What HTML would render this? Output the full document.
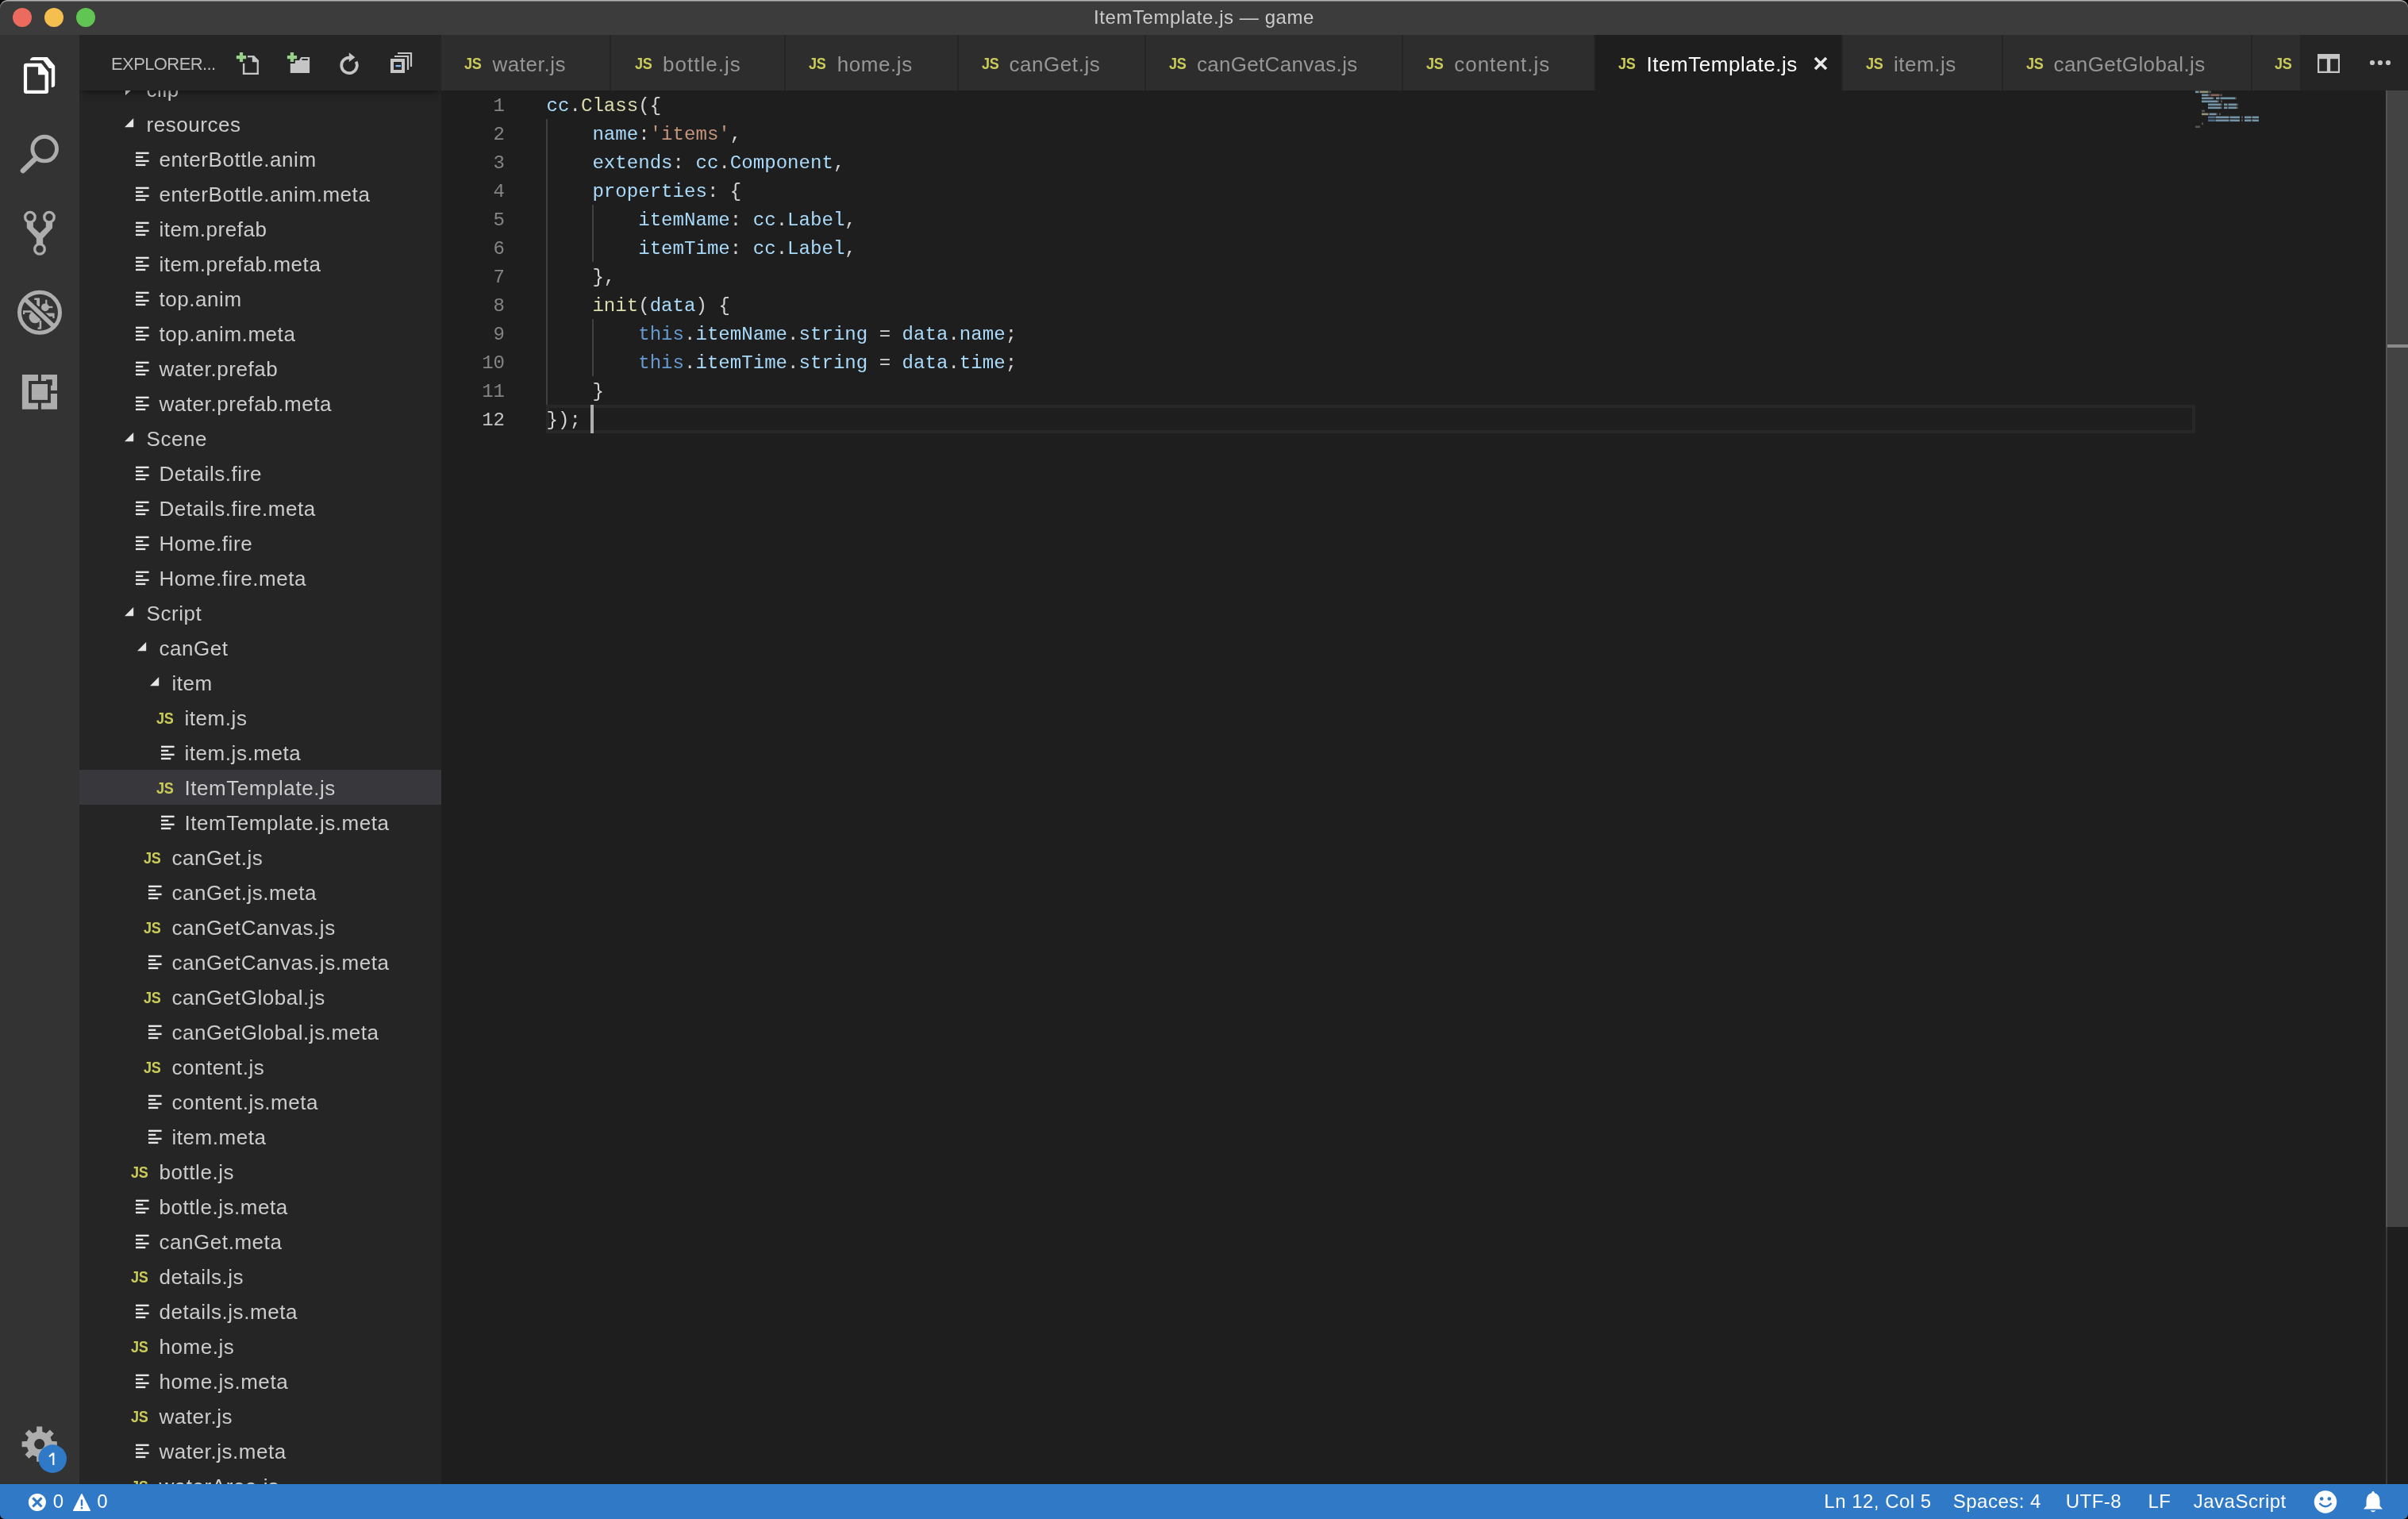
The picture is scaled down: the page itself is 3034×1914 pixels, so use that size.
<!DOCTYPE html>
<html><head><meta charset="utf-8"><title>VS Code</title><style>
html,body{margin:0;padding:0;width:3034px;height:1914px;overflow:hidden;background:#000;}
*{box-sizing:border-box;}
.abs{position:absolute;}
#win{will-change:transform;position:absolute;left:0;top:0;width:3034px;height:1914px;border-radius:9px 9px 6px 6px;overflow:hidden;background:#1e1e1e;font-family:"Liberation Sans",sans-serif;}
#title{position:absolute;left:0;top:0;width:3034px;height:44px;background:#3c3c3c;border-radius:9px 9px 0 0;box-shadow:inset 0 1.2px 0 #b4b4b4, inset 0 2px 0 #6a6a6a;}
#title .t{position:absolute;left:0;top:0;width:3034px;height:44px;line-height:44px;text-align:center;color:#cccccc;font-size:24px;letter-spacing:0.57px;}
.light{position:absolute;top:10px;width:24px;height:24px;border-radius:50%;}
#act{position:absolute;left:0;top:44px;width:100px;height:1826px;background:#333333;}
#side{position:absolute;left:100px;top:44px;width:456px;height:1826px;background:#252526;overflow:hidden;}
#sidehead{position:absolute;left:0;top:0;width:456px;height:70px;background:#252526;z-index:5;box-shadow:0 6px 8px -4px rgba(0,0,0,0.55);}
#sidehead .t{position:absolute;left:40px;top:2px;height:70px;line-height:70px;font-size:22px;color:#bbbbbb;letter-spacing:-0.6px;}
.row{position:absolute;left:0;width:456px;height:44px;}
.row .lbl{position:absolute;top:0;height:44px;line-height:44px;font-size:26px;color:#cccccc;white-space:pre;letter-spacing:0.55px;}
.row.sel{background:#37373c;}
.js{position:absolute;font-weight:bold;color:#cbcb5a;font-size:21px;letter-spacing:-0.3px;line-height:20px;transform:scaleX(0.86);transform-origin:0 0;}
#tabs{position:absolute;left:556px;top:44px;width:2478px;height:70px;background:#252526;}
.tab{position:absolute;top:0;height:70px;background:#2d2d2d;}
.tab.active{background:#1e1e1e;}
.tab .lbl{position:absolute;top:0;height:70px;line-height:70px;font-size:26px;color:#969696;white-space:pre;letter-spacing:0.55px;}
.tab.active .lbl{color:#ffffff;}
#editor{position:absolute;left:556px;top:114px;width:2478px;height:1756px;background:#1e1e1e;overflow:hidden;}
.ln{position:absolute;width:80px;text-align:right;font-family:"Liberation Mono",monospace;font-size:24px;height:36px;line-height:36px;color:#858585;}
.code{position:absolute;font-family:"Liberation Mono",monospace;font-size:24.08px;height:36px;line-height:36px;white-space:pre;color:#d4d4d4;}
.v{color:#aadafa}.f{color:#dcdcaf}.s{color:#c5947c}.k{color:#679ad1}
#status{position:absolute;left:0;top:1870px;width:3034px;height:44px;background:#2f79c7;color:#fff;}
#status .it{position:absolute;top:0;height:44px;line-height:44px;font-size:24px;white-space:pre;letter-spacing:0.5px;}
</style></head>
<body><div id="win">
<div id="title">
<div class="light" style="left:16px;background:#ec6a5e"></div>
<div class="light" style="left:56px;background:#f5bf4f"></div>
<div class="light" style="left:96px;background:#61c554"></div>
<div class="t">ItemTemplate.js — game</div></div>
<div id="act"></div>
<svg class="abs" style="left:0px;top:44px;" width="100" height="100" viewBox="0 44 100 100"><path fill="#ffffff" d="M37.8,76 Q38.6,72 42.5,72 L59.7,72 L69.2,83 L69.2,106.5 Q69.2,110 65.6,110 L64.8,110 L64.8,86.1 L61.9,86.1 L54.4,76 Z"/><path fill="#ffffff" fill-rule="evenodd" d="M33.1,79.8 L52,79.8 L61.1,90.9 L61.1,114.7 Q61.1,117.9 57.9,117.9 L33.1,117.9 Q29.9,117.9 29.9,114.7 L29.9,83 Q29.9,79.8 33.1,79.8 Z M34.1,84.2 L34.1,113.7 L56.5,113.7 L56.5,94.2 L48.1,94.2 L48.1,84.2 Z"/></svg>
<svg class="abs" style="left:0px;top:150px;" width="100" height="80" viewBox="0 150 100 80"><circle cx="56.2" cy="187.6" r="15.3" fill="none" stroke="#adadad" stroke-width="4.9"/><line x1="29" y1="215" x2="45" y2="199.5" stroke="#adadad" stroke-width="6.6" stroke-linecap="round"/></svg>
<svg class="abs" style="left:0px;top:250px;" width="100" height="80" viewBox="0 250 100 80"><circle cx="37.9" cy="273.7" r="6.25" fill="none" stroke="#adadad" stroke-width="3.3"/><circle cx="62" cy="273.7" r="6.25" fill="none" stroke="#adadad" stroke-width="3.3"/><circle cx="50" cy="313.9" r="6.3" fill="none" stroke="#adadad" stroke-width="3.3"/><path fill="#adadad" d="M33.8,279.5 L41.9,279.5 L41.9,286.3 L50,293.7 L57.8,286.3 L57.8,279.5 L66.1,279.5 L66.1,287.3 L54.1,300.2 L54.1,308 L45.8,308 L45.8,300.2 L33.8,287.3 Z"/></svg>
<svg class="abs" style="left:0px;top:360px;" width="100" height="70" viewBox="0 360 100 70"><circle cx="56.9" cy="387.3" r="4.9" fill="#adadad"/><circle cx="44.2" cy="399.6" r="7.6" fill="#adadad"/><path fill="#adadad" d="M43.3,375.5 L50,375.5 L50,386 L46.2,386 L46.2,378 L43.3,378 Z"/><rect x="57.2" y="377.7" width="2.2" height="7" fill="#adadad"/><rect x="59" y="385.8" width="7.3" height="2.3" fill="#adadad"/><path fill="#adadad" d="M54,394.4 L68.6,394.4 L68.6,401 L66.3,401 L66.3,398.8 L54,398.8 Z"/><path fill="#adadad" d="M29,391.3 L41,391.3 L41,393.8 L31.2,393.8 L31.2,396 L29,396 Z"/><path fill="#adadad" d="M49.6,404 L52.2,404 L52.2,414.8 L47.5,414.8 L47.5,412.4 L49.6,412.4 Z"/><line x1="31" y1="376.5" x2="68" y2="411.5" stroke="#333333" stroke-width="10"/><line x1="31" y1="376.5" x2="68" y2="411.5" stroke="#adadad" stroke-width="5.6"/><circle cx="50" cy="393.8" r="25.5" fill="none" stroke="#adadad" stroke-width="5"/></svg>
<svg class="abs" style="left:0px;top:460px;" width="100" height="70" viewBox="0 460 100 70"><path fill="#adadad" fill-rule="evenodd" d="M27.9,472 L48,472 L48,480.1 L36,480.1 L36,507.7 L48,507.7 L48,515.8 L27.9,515.8 Z"/><path fill="#adadad" d="M51.9,472 L72,472 L72,491.9 L63.9,491.9 L63.9,485.7 L65.8,485.7 L65.8,478.2 L58.1,478.2 L58.1,480.1 L51.9,480.1 Z"/><path fill="#adadad" d="M51.9,507.7 L63.9,507.7 L63.9,496 L72,496 L72,515.8 L51.9,515.8 Z"/><rect x="39.9" y="484" width="20.1" height="19.9" fill="#adadad"/></svg>
<svg class="abs" style="left:0px;top:1780px;" width="100" height="90" viewBox="0 1780 100 90"><path fill="#adadad" fill-rule="evenodd" d="M46.06,1803.92 L46.20,1797.58 L53.20,1797.58 L53.34,1803.92 L58.28,1805.96 L62.87,1801.58 L67.82,1806.53 L63.44,1811.12 L65.48,1816.06 L71.82,1816.20 L71.82,1823.20 L65.48,1823.34 L63.44,1828.28 L67.82,1832.87 L62.87,1837.82 L58.28,1833.44 L53.34,1835.48 L53.20,1841.82 L46.20,1841.82 L46.06,1835.48 L41.12,1833.44 L36.53,1837.82 L31.58,1832.87 L35.96,1828.28 L33.92,1823.34 L27.58,1823.20 L27.58,1816.20 L33.92,1816.06 L35.96,1811.12 L31.58,1806.53 L36.53,1801.58 L41.12,1805.96 Z M56.300000000000004,1819.7 A6.6,6.6 0 1,0 43.1,1819.7 A6.6,6.6 0 1,0 56.300000000000004,1819.7 Z"/><circle cx="66.2" cy="1838.1" r="17.8" fill="#2f79c7"/></svg>
<svg class="abs" style="left:50px;top:1820px" width="36" height="36" viewBox="50 1820 36 36"><path d="M66.1,1830.6 L68.4,1830.6 L68.4,1846.1 L66.3,1846.1 L66.3,1833.5 L62.4,1836.2 L61.4,1834.6 Z" fill="#ffffff"/></svg>
<div id="side">
<div class="row" style="top:46px"><svg class="abs" style="left:57px;top:15px" width="12" height="16" viewBox="0 0 12 16"><path d="M1,1 L9,8 L1,15 Z" fill="#e6e6e6"/></svg><div class="lbl" style="left:84.5px;top:1px">clip</div></div>
<div class="row" style="top:90px"><svg class="abs" style="left:57px;top:15px" width="12" height="12" viewBox="0 0 12 12"><path d="M0,11.2 L11.2,0 L11.2,11.2 Z" fill="#e6e6e6"/></svg><div class="lbl" style="left:84.5px;top:1px">resources</div></div>
<div class="row" style="top:134px"><svg class="abs" style="left:71px;top:13px" width="18" height="20" viewBox="0 0 18 20"><rect x="0" y="0.7" width="16.6" height="2.4" fill="#e6e6e6"/><rect x="0" y="5.7" width="9.3" height="2.4" fill="#e6e6e6"/><rect x="0" y="10.7" width="16.6" height="2.4" fill="#e6e6e6"/><rect x="0" y="15.7" width="12.3" height="2.4" fill="#e6e6e6"/></svg><div class="lbl" style="left:100.5px;top:1px">enterBottle.anim</div></div>
<div class="row" style="top:178px"><svg class="abs" style="left:71px;top:13px" width="18" height="20" viewBox="0 0 18 20"><rect x="0" y="0.7" width="16.6" height="2.4" fill="#e6e6e6"/><rect x="0" y="5.7" width="9.3" height="2.4" fill="#e6e6e6"/><rect x="0" y="10.7" width="16.6" height="2.4" fill="#e6e6e6"/><rect x="0" y="15.7" width="12.3" height="2.4" fill="#e6e6e6"/></svg><div class="lbl" style="left:100.5px;top:1px">enterBottle.anim.meta</div></div>
<div class="row" style="top:222px"><svg class="abs" style="left:71px;top:13px" width="18" height="20" viewBox="0 0 18 20"><rect x="0" y="0.7" width="16.6" height="2.4" fill="#e6e6e6"/><rect x="0" y="5.7" width="9.3" height="2.4" fill="#e6e6e6"/><rect x="0" y="10.7" width="16.6" height="2.4" fill="#e6e6e6"/><rect x="0" y="15.7" width="12.3" height="2.4" fill="#e6e6e6"/></svg><div class="lbl" style="left:100.5px;top:1px">item.prefab</div></div>
<div class="row" style="top:266px"><svg class="abs" style="left:71px;top:13px" width="18" height="20" viewBox="0 0 18 20"><rect x="0" y="0.7" width="16.6" height="2.4" fill="#e6e6e6"/><rect x="0" y="5.7" width="9.3" height="2.4" fill="#e6e6e6"/><rect x="0" y="10.7" width="16.6" height="2.4" fill="#e6e6e6"/><rect x="0" y="15.7" width="12.3" height="2.4" fill="#e6e6e6"/></svg><div class="lbl" style="left:100.5px;top:1px">item.prefab.meta</div></div>
<div class="row" style="top:310px"><svg class="abs" style="left:71px;top:13px" width="18" height="20" viewBox="0 0 18 20"><rect x="0" y="0.7" width="16.6" height="2.4" fill="#e6e6e6"/><rect x="0" y="5.7" width="9.3" height="2.4" fill="#e6e6e6"/><rect x="0" y="10.7" width="16.6" height="2.4" fill="#e6e6e6"/><rect x="0" y="15.7" width="12.3" height="2.4" fill="#e6e6e6"/></svg><div class="lbl" style="left:100.5px;top:1px">top.anim</div></div>
<div class="row" style="top:354px"><svg class="abs" style="left:71px;top:13px" width="18" height="20" viewBox="0 0 18 20"><rect x="0" y="0.7" width="16.6" height="2.4" fill="#e6e6e6"/><rect x="0" y="5.7" width="9.3" height="2.4" fill="#e6e6e6"/><rect x="0" y="10.7" width="16.6" height="2.4" fill="#e6e6e6"/><rect x="0" y="15.7" width="12.3" height="2.4" fill="#e6e6e6"/></svg><div class="lbl" style="left:100.5px;top:1px">top.anim.meta</div></div>
<div class="row" style="top:398px"><svg class="abs" style="left:71px;top:13px" width="18" height="20" viewBox="0 0 18 20"><rect x="0" y="0.7" width="16.6" height="2.4" fill="#e6e6e6"/><rect x="0" y="5.7" width="9.3" height="2.4" fill="#e6e6e6"/><rect x="0" y="10.7" width="16.6" height="2.4" fill="#e6e6e6"/><rect x="0" y="15.7" width="12.3" height="2.4" fill="#e6e6e6"/></svg><div class="lbl" style="left:100.5px;top:1px">water.prefab</div></div>
<div class="row" style="top:442px"><svg class="abs" style="left:71px;top:13px" width="18" height="20" viewBox="0 0 18 20"><rect x="0" y="0.7" width="16.6" height="2.4" fill="#e6e6e6"/><rect x="0" y="5.7" width="9.3" height="2.4" fill="#e6e6e6"/><rect x="0" y="10.7" width="16.6" height="2.4" fill="#e6e6e6"/><rect x="0" y="15.7" width="12.3" height="2.4" fill="#e6e6e6"/></svg><div class="lbl" style="left:100.5px;top:1px">water.prefab.meta</div></div>
<div class="row" style="top:486px"><svg class="abs" style="left:57px;top:15px" width="12" height="12" viewBox="0 0 12 12"><path d="M0,11.2 L11.2,0 L11.2,11.2 Z" fill="#e6e6e6"/></svg><div class="lbl" style="left:84.5px;top:1px">Scene</div></div>
<div class="row" style="top:530px"><svg class="abs" style="left:71px;top:13px" width="18" height="20" viewBox="0 0 18 20"><rect x="0" y="0.7" width="16.6" height="2.4" fill="#e6e6e6"/><rect x="0" y="5.7" width="9.3" height="2.4" fill="#e6e6e6"/><rect x="0" y="10.7" width="16.6" height="2.4" fill="#e6e6e6"/><rect x="0" y="15.7" width="12.3" height="2.4" fill="#e6e6e6"/></svg><div class="lbl" style="left:100.5px;top:1px">Details.fire</div></div>
<div class="row" style="top:574px"><svg class="abs" style="left:71px;top:13px" width="18" height="20" viewBox="0 0 18 20"><rect x="0" y="0.7" width="16.6" height="2.4" fill="#e6e6e6"/><rect x="0" y="5.7" width="9.3" height="2.4" fill="#e6e6e6"/><rect x="0" y="10.7" width="16.6" height="2.4" fill="#e6e6e6"/><rect x="0" y="15.7" width="12.3" height="2.4" fill="#e6e6e6"/></svg><div class="lbl" style="left:100.5px;top:1px">Details.fire.meta</div></div>
<div class="row" style="top:618px"><svg class="abs" style="left:71px;top:13px" width="18" height="20" viewBox="0 0 18 20"><rect x="0" y="0.7" width="16.6" height="2.4" fill="#e6e6e6"/><rect x="0" y="5.7" width="9.3" height="2.4" fill="#e6e6e6"/><rect x="0" y="10.7" width="16.6" height="2.4" fill="#e6e6e6"/><rect x="0" y="15.7" width="12.3" height="2.4" fill="#e6e6e6"/></svg><div class="lbl" style="left:100.5px;top:1px">Home.fire</div></div>
<div class="row" style="top:662px"><svg class="abs" style="left:71px;top:13px" width="18" height="20" viewBox="0 0 18 20"><rect x="0" y="0.7" width="16.6" height="2.4" fill="#e6e6e6"/><rect x="0" y="5.7" width="9.3" height="2.4" fill="#e6e6e6"/><rect x="0" y="10.7" width="16.6" height="2.4" fill="#e6e6e6"/><rect x="0" y="15.7" width="12.3" height="2.4" fill="#e6e6e6"/></svg><div class="lbl" style="left:100.5px;top:1px">Home.fire.meta</div></div>
<div class="row" style="top:706px"><svg class="abs" style="left:57px;top:15px" width="12" height="12" viewBox="0 0 12 12"><path d="M0,11.2 L11.2,0 L11.2,11.2 Z" fill="#e6e6e6"/></svg><div class="lbl" style="left:84.5px;top:1px">Script</div></div>
<div class="row" style="top:750px"><svg class="abs" style="left:73px;top:15px" width="12" height="12" viewBox="0 0 12 12"><path d="M0,11.2 L11.2,0 L11.2,11.2 Z" fill="#e6e6e6"/></svg><div class="lbl" style="left:100.5px;top:1px">canGet</div></div>
<div class="row" style="top:794px"><svg class="abs" style="left:89px;top:15px" width="12" height="12" viewBox="0 0 12 12"><path d="M0,11.2 L11.2,0 L11.2,11.2 Z" fill="#e6e6e6"/></svg><div class="lbl" style="left:116.5px;top:1px">item</div></div>
<div class="row" style="top:838px"><div class="js" style="left:96.5px;top:13px;">JS</div><div class="lbl" style="left:132.5px;top:1px">item.js</div></div>
<div class="row" style="top:882px"><svg class="abs" style="left:103px;top:13px" width="18" height="20" viewBox="0 0 18 20"><rect x="0" y="0.7" width="16.6" height="2.4" fill="#e6e6e6"/><rect x="0" y="5.7" width="9.3" height="2.4" fill="#e6e6e6"/><rect x="0" y="10.7" width="16.6" height="2.4" fill="#e6e6e6"/><rect x="0" y="15.7" width="12.3" height="2.4" fill="#e6e6e6"/></svg><div class="lbl" style="left:132.5px;top:1px">item.js.meta</div></div>
<div class="row sel" style="top:926px"><div class="js" style="left:96.5px;top:13px;">JS</div><div class="lbl" style="left:132.5px;top:1px">ItemTemplate.js</div></div>
<div class="row" style="top:970px"><svg class="abs" style="left:103px;top:13px" width="18" height="20" viewBox="0 0 18 20"><rect x="0" y="0.7" width="16.6" height="2.4" fill="#e6e6e6"/><rect x="0" y="5.7" width="9.3" height="2.4" fill="#e6e6e6"/><rect x="0" y="10.7" width="16.6" height="2.4" fill="#e6e6e6"/><rect x="0" y="15.7" width="12.3" height="2.4" fill="#e6e6e6"/></svg><div class="lbl" style="left:132.5px;top:1px">ItemTemplate.js.meta</div></div>
<div class="row" style="top:1014px"><div class="js" style="left:80.5px;top:13px;">JS</div><div class="lbl" style="left:116.5px;top:1px">canGet.js</div></div>
<div class="row" style="top:1058px"><svg class="abs" style="left:87px;top:13px" width="18" height="20" viewBox="0 0 18 20"><rect x="0" y="0.7" width="16.6" height="2.4" fill="#e6e6e6"/><rect x="0" y="5.7" width="9.3" height="2.4" fill="#e6e6e6"/><rect x="0" y="10.7" width="16.6" height="2.4" fill="#e6e6e6"/><rect x="0" y="15.7" width="12.3" height="2.4" fill="#e6e6e6"/></svg><div class="lbl" style="left:116.5px;top:1px">canGet.js.meta</div></div>
<div class="row" style="top:1102px"><div class="js" style="left:80.5px;top:13px;">JS</div><div class="lbl" style="left:116.5px;top:1px">canGetCanvas.js</div></div>
<div class="row" style="top:1146px"><svg class="abs" style="left:87px;top:13px" width="18" height="20" viewBox="0 0 18 20"><rect x="0" y="0.7" width="16.6" height="2.4" fill="#e6e6e6"/><rect x="0" y="5.7" width="9.3" height="2.4" fill="#e6e6e6"/><rect x="0" y="10.7" width="16.6" height="2.4" fill="#e6e6e6"/><rect x="0" y="15.7" width="12.3" height="2.4" fill="#e6e6e6"/></svg><div class="lbl" style="left:116.5px;top:1px">canGetCanvas.js.meta</div></div>
<div class="row" style="top:1190px"><div class="js" style="left:80.5px;top:13px;">JS</div><div class="lbl" style="left:116.5px;top:1px">canGetGlobal.js</div></div>
<div class="row" style="top:1234px"><svg class="abs" style="left:87px;top:13px" width="18" height="20" viewBox="0 0 18 20"><rect x="0" y="0.7" width="16.6" height="2.4" fill="#e6e6e6"/><rect x="0" y="5.7" width="9.3" height="2.4" fill="#e6e6e6"/><rect x="0" y="10.7" width="16.6" height="2.4" fill="#e6e6e6"/><rect x="0" y="15.7" width="12.3" height="2.4" fill="#e6e6e6"/></svg><div class="lbl" style="left:116.5px;top:1px">canGetGlobal.js.meta</div></div>
<div class="row" style="top:1278px"><div class="js" style="left:80.5px;top:13px;">JS</div><div class="lbl" style="left:116.5px;top:1px">content.js</div></div>
<div class="row" style="top:1322px"><svg class="abs" style="left:87px;top:13px" width="18" height="20" viewBox="0 0 18 20"><rect x="0" y="0.7" width="16.6" height="2.4" fill="#e6e6e6"/><rect x="0" y="5.7" width="9.3" height="2.4" fill="#e6e6e6"/><rect x="0" y="10.7" width="16.6" height="2.4" fill="#e6e6e6"/><rect x="0" y="15.7" width="12.3" height="2.4" fill="#e6e6e6"/></svg><div class="lbl" style="left:116.5px;top:1px">content.js.meta</div></div>
<div class="row" style="top:1366px"><svg class="abs" style="left:87px;top:13px" width="18" height="20" viewBox="0 0 18 20"><rect x="0" y="0.7" width="16.6" height="2.4" fill="#e6e6e6"/><rect x="0" y="5.7" width="9.3" height="2.4" fill="#e6e6e6"/><rect x="0" y="10.7" width="16.6" height="2.4" fill="#e6e6e6"/><rect x="0" y="15.7" width="12.3" height="2.4" fill="#e6e6e6"/></svg><div class="lbl" style="left:116.5px;top:1px">item.meta</div></div>
<div class="row" style="top:1410px"><div class="js" style="left:64.5px;top:13px;">JS</div><div class="lbl" style="left:100.5px;top:1px">bottle.js</div></div>
<div class="row" style="top:1454px"><svg class="abs" style="left:71px;top:13px" width="18" height="20" viewBox="0 0 18 20"><rect x="0" y="0.7" width="16.6" height="2.4" fill="#e6e6e6"/><rect x="0" y="5.7" width="9.3" height="2.4" fill="#e6e6e6"/><rect x="0" y="10.7" width="16.6" height="2.4" fill="#e6e6e6"/><rect x="0" y="15.7" width="12.3" height="2.4" fill="#e6e6e6"/></svg><div class="lbl" style="left:100.5px;top:1px">bottle.js.meta</div></div>
<div class="row" style="top:1498px"><svg class="abs" style="left:71px;top:13px" width="18" height="20" viewBox="0 0 18 20"><rect x="0" y="0.7" width="16.6" height="2.4" fill="#e6e6e6"/><rect x="0" y="5.7" width="9.3" height="2.4" fill="#e6e6e6"/><rect x="0" y="10.7" width="16.6" height="2.4" fill="#e6e6e6"/><rect x="0" y="15.7" width="12.3" height="2.4" fill="#e6e6e6"/></svg><div class="lbl" style="left:100.5px;top:1px">canGet.meta</div></div>
<div class="row" style="top:1542px"><div class="js" style="left:64.5px;top:13px;">JS</div><div class="lbl" style="left:100.5px;top:1px">details.js</div></div>
<div class="row" style="top:1586px"><svg class="abs" style="left:71px;top:13px" width="18" height="20" viewBox="0 0 18 20"><rect x="0" y="0.7" width="16.6" height="2.4" fill="#e6e6e6"/><rect x="0" y="5.7" width="9.3" height="2.4" fill="#e6e6e6"/><rect x="0" y="10.7" width="16.6" height="2.4" fill="#e6e6e6"/><rect x="0" y="15.7" width="12.3" height="2.4" fill="#e6e6e6"/></svg><div class="lbl" style="left:100.5px;top:1px">details.js.meta</div></div>
<div class="row" style="top:1630px"><div class="js" style="left:64.5px;top:13px;">JS</div><div class="lbl" style="left:100.5px;top:1px">home.js</div></div>
<div class="row" style="top:1674px"><svg class="abs" style="left:71px;top:13px" width="18" height="20" viewBox="0 0 18 20"><rect x="0" y="0.7" width="16.6" height="2.4" fill="#e6e6e6"/><rect x="0" y="5.7" width="9.3" height="2.4" fill="#e6e6e6"/><rect x="0" y="10.7" width="16.6" height="2.4" fill="#e6e6e6"/><rect x="0" y="15.7" width="12.3" height="2.4" fill="#e6e6e6"/></svg><div class="lbl" style="left:100.5px;top:1px">home.js.meta</div></div>
<div class="row" style="top:1718px"><div class="js" style="left:64.5px;top:13px;">JS</div><div class="lbl" style="left:100.5px;top:1px">water.js</div></div>
<div class="row" style="top:1762px"><svg class="abs" style="left:71px;top:13px" width="18" height="20" viewBox="0 0 18 20"><rect x="0" y="0.7" width="16.6" height="2.4" fill="#e6e6e6"/><rect x="0" y="5.7" width="9.3" height="2.4" fill="#e6e6e6"/><rect x="0" y="10.7" width="16.6" height="2.4" fill="#e6e6e6"/><rect x="0" y="15.7" width="12.3" height="2.4" fill="#e6e6e6"/></svg><div class="lbl" style="left:100.5px;top:1px">water.js.meta</div></div>
<div class="row" style="top:1806px"><div class="js" style="left:64.5px;top:13px;">JS</div><div class="lbl" style="left:100.5px;top:1px">waterArea.js</div></div>
<div id="sidehead"><div class="t">EXPLORER...</div></div>
</div>
<svg class="abs" style="left:280px;top:55px;z-index:10;" width="260" height="50" viewBox="280 55 260 50"><rect x="312" y="70.1" width="8" height="2.2" fill="#c5c5c5"/><path fill="#c5c5c5" d="M317.8,70.1 L320,70.1 L325.9,75.9 L325.9,78.2 L317.8,78.2 Z"/><rect x="323.6" y="75.7" width="2.3" height="18.3" fill="#c5c5c5"/><rect x="305.9" y="91.7" width="20" height="2.3" fill="#c5c5c5"/><rect x="305.9" y="79.9" width="2.4" height="14.1" fill="#c5c5c5"/><path fill="#99cf8c" d="M301.9,65.9 L306.1,65.9 L306.1,70.1 L310.2,70.1 L310.2,74.25 L306.1,74.25 L306.1,78 L301.9,78 L301.9,74.25 L297.8,74.25 L297.8,70.1 L301.9,70.1 Z"/><path fill="#c5c5c5" d="M365.8,79.9 L371.8,79.9 L371.8,76.1 L377,76.1 L379.3,72 L390.1,72 L390.1,91.9 L365.8,91.9 Z"/><rect x="380.5" y="74" width="7.3" height="1.9" fill="#252526"/><path fill="#99cf8c" d="M365.8,65.9 L370.1,65.9 L370.1,70.1 L374.1,70.1 L374.1,74.25 L370.1,74.25 L370.1,78 L365.8,78 L365.8,74.25 L361.9,74.25 L361.9,70.1 L365.8,70.1 Z"/><path fill="none" stroke="#c5c5c5" stroke-width="3.7" d="M440.5,72.55 A9.8,9.8 0 1,0 448.6,77.6"/><path fill="#c5c5c5" d="M439.8,66.3 L447.4,72.2 L439.8,78.1 Z"/><path fill="none" stroke="#c5c5c5" stroke-width="2.2" d="M501,67 L518,67 L518,84"/><path fill="none" stroke="#c5c5c5" stroke-width="2.2" d="M497,71 L514,71 L514,88"/><rect x="494" y="76" width="14" height="14" fill="none" stroke="#c5c5c5" stroke-width="4"/><rect x="498.5" y="82" width="6.5" height="2.2" fill="#86bcf9"/></svg>
<div id="tabs">
<div class="tab" style="left:0px;width:212px"><div class="js" style="left:28.5px;top:26px;">JS</div><div class="lbl" style="left:64.5px;top:2px;letter-spacing:0.55px">water.js</div></div>
<div class="tab" style="left:214px;width:218px"><div class="js" style="left:29.5px;top:26px;">JS</div><div class="lbl" style="left:65.10000000000002px;top:2px;letter-spacing:1.0px">bottle.js</div></div>
<div class="tab" style="left:434px;width:216px"><div class="js" style="left:28.899999999999977px;top:26px;">JS</div><div class="lbl" style="left:64.79999999999995px;top:2px;letter-spacing:0.55px">home.js</div></div>
<div class="tab" style="left:652px;width:234px"><div class="js" style="left:29.09999999999991px;top:26px;">JS</div><div class="lbl" style="left:63.5px;top:2px;letter-spacing:0.55px">canGet.js</div></div>
<div class="tab" style="left:888px;width:322px"><div class="js" style="left:28.5px;top:26px;">JS</div><div class="lbl" style="left:63.90000000000009px;top:2px;letter-spacing:0.31px">canGetCanvas.js</div></div>
<div class="tab" style="left:1212px;width:240px"><div class="js" style="left:28.5px;top:26px;">JS</div><div class="lbl" style="left:64.29999999999995px;top:2px;letter-spacing:0.95px">content.js</div></div>
<div class="tab active" style="left:1454px;width:310px"><div class="js" style="left:29.0px;top:26px;">JS</div><div class="lbl" style="left:64.5px;top:2px;letter-spacing:0.55px">ItemTemplate.js</div><svg class="abs" style="left:274px;top:26px" width="20" height="20" viewBox="0 0 20 20"><path d="M3,3 L17,17 M17,3 L3,17" stroke="#e8e8e8" stroke-width="3.6"/></svg></div>
<div class="tab" style="left:1766px;width:200px"><div class="js" style="left:28.5px;top:26px;">JS</div><div class="lbl" style="left:63.90000000000009px;top:2px;letter-spacing:0.55px">item.js</div></div>
<div class="tab" style="left:1968px;width:312px"><div class="js" style="left:28.5px;top:26px;">JS</div><div class="lbl" style="left:63.5px;top:2px;letter-spacing:0.41px">canGetGlobal.js</div></div>
<div class="tab" style="left:2282px;width:60px"><div class="js" style="left:28.0px;top:26px;">JS</div></div>
<svg class="abs" style="left:2364px;top:24px;z-index:2" width="32" height="28" viewBox="2920 68 32 28"><rect x="2920" y="68" width="28" height="24" fill="#c5c5c5"/><rect x="2922.2" y="74.2" width="9.7" height="15.5" fill="#252526"/><rect x="2936.2" y="74.2" width="9.7" height="15.5" fill="#252526"/></svg>
<svg class="abs" style="left:2428px;top:24px" width="40" height="16" viewBox="2984 68 40 16"><circle cx="2989" cy="79" r="3.1" fill="#c5c5c5"/><circle cx="2998.9" cy="79" r="3.1" fill="#c5c5c5"/><circle cx="3009" cy="79" r="3.1" fill="#c5c5c5"/></svg>
</div>
<div id="editor">
<div class="abs" style="left:132px;top:396px;width:2078px;height:36px;border:4px solid #282828;"></div>
<div class="abs" style="left:132px;top:36px;width:2px;height:360px;background:#404040;"></div>
<div class="abs" style="left:190px;top:144px;width:2px;height:72px;background:#404040;"></div>
<div class="abs" style="left:190px;top:288px;width:2px;height:72px;background:#404040;"></div>
<div class="ln" style="left:0px;top:2px;color:#858585">1</div>
<div class="code" style="left:132.5999999999999px;top:2px"><span class="v">cc</span>.<span class="f">Class</span>({</div>
<div class="ln" style="left:0px;top:38px;color:#858585">2</div>
<div class="code" style="left:132.5999999999999px;top:38px">    <span class="v">name</span>:<span class="s">'items'</span>,</div>
<div class="ln" style="left:0px;top:74px;color:#858585">3</div>
<div class="code" style="left:132.5999999999999px;top:74px">    <span class="v">extends</span>: <span class="v">cc</span>.<span class="v">Component</span>,</div>
<div class="ln" style="left:0px;top:110px;color:#858585">4</div>
<div class="code" style="left:132.5999999999999px;top:110px">    <span class="v">properties</span>: {</div>
<div class="ln" style="left:0px;top:146px;color:#858585">5</div>
<div class="code" style="left:132.5999999999999px;top:146px">        <span class="v">itemName</span>: <span class="v">cc</span>.<span class="v">Label</span>,</div>
<div class="ln" style="left:0px;top:182px;color:#858585">6</div>
<div class="code" style="left:132.5999999999999px;top:182px">        <span class="v">itemTime</span>: <span class="v">cc</span>.<span class="v">Label</span>,</div>
<div class="ln" style="left:0px;top:218px;color:#858585">7</div>
<div class="code" style="left:132.5999999999999px;top:218px">    },</div>
<div class="ln" style="left:0px;top:254px;color:#858585">8</div>
<div class="code" style="left:132.5999999999999px;top:254px">    <span class="f">init</span>(<span class="v">data</span>) {</div>
<div class="ln" style="left:0px;top:290px;color:#858585">9</div>
<div class="code" style="left:132.5999999999999px;top:290px">        <span class="k">this</span>.<span class="v">itemName</span>.<span class="v">string</span> = <span class="v">data</span>.<span class="v">name</span>;</div>
<div class="ln" style="left:0px;top:326px;color:#858585">10</div>
<div class="code" style="left:132.5999999999999px;top:326px">        <span class="k">this</span>.<span class="v">itemTime</span>.<span class="v">string</span> = <span class="v">data</span>.<span class="v">time</span>;</div>
<div class="ln" style="left:0px;top:362px;color:#858585">11</div>
<div class="code" style="left:132.5999999999999px;top:362px">    }</div>
<div class="ln" style="left:0px;top:398px;color:#c6c6c6">12</div>
<div class="code" style="left:132.5999999999999px;top:398px">});</div>
<div class="abs" style="left:188px;top:396px;width:4px;height:36px;background:#aeafad;"></div>
<svg class="abs" style="left:2210px;top:0px" width="80" height="50" viewBox="0 0 80 50"><rect x="0" y="0.5" width="2" height="2.6" fill="#aadafa" opacity="0.62"/><rect x="2" y="0.5" width="2" height="2.6" fill="#aadafa" opacity="0.62"/><rect x="4" y="0.5" width="2" height="2.6" fill="#d4d4d4" opacity="0.3"/><rect x="6" y="0.5" width="2" height="2.6" fill="#dcdcaf" opacity="0.62"/><rect x="8" y="0.5" width="2" height="2.6" fill="#dcdcaf" opacity="0.62"/><rect x="10" y="0.5" width="2" height="2.6" fill="#dcdcaf" opacity="0.62"/><rect x="12" y="0.5" width="2" height="2.6" fill="#dcdcaf" opacity="0.62"/><rect x="14" y="0.5" width="2" height="2.6" fill="#dcdcaf" opacity="0.62"/><rect x="16" y="0.5" width="2" height="2.6" fill="#d4d4d4" opacity="0.3"/><rect x="18" y="0.5" width="2" height="2.6" fill="#d4d4d4" opacity="0.3"/><rect x="8" y="4.5" width="2" height="2.6" fill="#aadafa" opacity="0.62"/><rect x="10" y="4.5" width="2" height="2.6" fill="#aadafa" opacity="0.62"/><rect x="12" y="4.5" width="2" height="2.6" fill="#aadafa" opacity="0.62"/><rect x="14" y="4.5" width="2" height="2.6" fill="#aadafa" opacity="0.62"/><rect x="16" y="4.5" width="2" height="2.6" fill="#d4d4d4" opacity="0.3"/><rect x="18" y="4.5" width="2" height="2.6" fill="#c5947c" opacity="0.3"/><rect x="20" y="4.5" width="2" height="2.6" fill="#c5947c" opacity="0.62"/><rect x="22" y="4.5" width="2" height="2.6" fill="#c5947c" opacity="0.62"/><rect x="24" y="4.5" width="2" height="2.6" fill="#c5947c" opacity="0.62"/><rect x="26" y="4.5" width="2" height="2.6" fill="#c5947c" opacity="0.62"/><rect x="28" y="4.5" width="2" height="2.6" fill="#c5947c" opacity="0.62"/><rect x="30" y="4.5" width="2" height="2.6" fill="#c5947c" opacity="0.3"/><rect x="32" y="4.5" width="2" height="2.6" fill="#d4d4d4" opacity="0.3"/><rect x="8" y="8.5" width="2" height="2.6" fill="#aadafa" opacity="0.62"/><rect x="10" y="8.5" width="2" height="2.6" fill="#aadafa" opacity="0.62"/><rect x="12" y="8.5" width="2" height="2.6" fill="#aadafa" opacity="0.62"/><rect x="14" y="8.5" width="2" height="2.6" fill="#aadafa" opacity="0.62"/><rect x="16" y="8.5" width="2" height="2.6" fill="#aadafa" opacity="0.62"/><rect x="18" y="8.5" width="2" height="2.6" fill="#aadafa" opacity="0.62"/><rect x="20" y="8.5" width="2" height="2.6" fill="#aadafa" opacity="0.62"/><rect x="22" y="8.5" width="2" height="2.6" fill="#d4d4d4" opacity="0.3"/><rect x="26" y="8.5" width="2" height="2.6" fill="#aadafa" opacity="0.62"/><rect x="28" y="8.5" width="2" height="2.6" fill="#aadafa" opacity="0.62"/><rect x="30" y="8.5" width="2" height="2.6" fill="#d4d4d4" opacity="0.3"/><rect x="32" y="8.5" width="2" height="2.6" fill="#aadafa" opacity="0.62"/><rect x="34" y="8.5" width="2" height="2.6" fill="#aadafa" opacity="0.62"/><rect x="36" y="8.5" width="2" height="2.6" fill="#aadafa" opacity="0.62"/><rect x="38" y="8.5" width="2" height="2.6" fill="#aadafa" opacity="0.62"/><rect x="40" y="8.5" width="2" height="2.6" fill="#aadafa" opacity="0.62"/><rect x="42" y="8.5" width="2" height="2.6" fill="#aadafa" opacity="0.62"/><rect x="44" y="8.5" width="2" height="2.6" fill="#aadafa" opacity="0.62"/><rect x="46" y="8.5" width="2" height="2.6" fill="#aadafa" opacity="0.62"/><rect x="48" y="8.5" width="2" height="2.6" fill="#aadafa" opacity="0.62"/><rect x="50" y="8.5" width="2" height="2.6" fill="#d4d4d4" opacity="0.3"/><rect x="8" y="12.5" width="2" height="2.6" fill="#aadafa" opacity="0.62"/><rect x="10" y="12.5" width="2" height="2.6" fill="#aadafa" opacity="0.62"/><rect x="12" y="12.5" width="2" height="2.6" fill="#aadafa" opacity="0.62"/><rect x="14" y="12.5" width="2" height="2.6" fill="#aadafa" opacity="0.62"/><rect x="16" y="12.5" width="2" height="2.6" fill="#aadafa" opacity="0.62"/><rect x="18" y="12.5" width="2" height="2.6" fill="#aadafa" opacity="0.62"/><rect x="20" y="12.5" width="2" height="2.6" fill="#aadafa" opacity="0.62"/><rect x="22" y="12.5" width="2" height="2.6" fill="#aadafa" opacity="0.62"/><rect x="24" y="12.5" width="2" height="2.6" fill="#aadafa" opacity="0.62"/><rect x="26" y="12.5" width="2" height="2.6" fill="#aadafa" opacity="0.62"/><rect x="28" y="12.5" width="2" height="2.6" fill="#d4d4d4" opacity="0.3"/><rect x="32" y="12.5" width="2" height="2.6" fill="#d4d4d4" opacity="0.3"/><rect x="16" y="16.5" width="2" height="2.6" fill="#aadafa" opacity="0.62"/><rect x="18" y="16.5" width="2" height="2.6" fill="#aadafa" opacity="0.62"/><rect x="20" y="16.5" width="2" height="2.6" fill="#aadafa" opacity="0.62"/><rect x="22" y="16.5" width="2" height="2.6" fill="#aadafa" opacity="0.62"/><rect x="24" y="16.5" width="2" height="2.6" fill="#aadafa" opacity="0.62"/><rect x="26" y="16.5" width="2" height="2.6" fill="#aadafa" opacity="0.62"/><rect x="28" y="16.5" width="2" height="2.6" fill="#aadafa" opacity="0.62"/><rect x="30" y="16.5" width="2" height="2.6" fill="#aadafa" opacity="0.62"/><rect x="32" y="16.5" width="2" height="2.6" fill="#d4d4d4" opacity="0.3"/><rect x="36" y="16.5" width="2" height="2.6" fill="#aadafa" opacity="0.62"/><rect x="38" y="16.5" width="2" height="2.6" fill="#aadafa" opacity="0.62"/><rect x="40" y="16.5" width="2" height="2.6" fill="#d4d4d4" opacity="0.3"/><rect x="42" y="16.5" width="2" height="2.6" fill="#aadafa" opacity="0.62"/><rect x="44" y="16.5" width="2" height="2.6" fill="#aadafa" opacity="0.62"/><rect x="46" y="16.5" width="2" height="2.6" fill="#aadafa" opacity="0.62"/><rect x="48" y="16.5" width="2" height="2.6" fill="#aadafa" opacity="0.62"/><rect x="50" y="16.5" width="2" height="2.6" fill="#aadafa" opacity="0.62"/><rect x="52" y="16.5" width="2" height="2.6" fill="#d4d4d4" opacity="0.3"/><rect x="16" y="20.5" width="2" height="2.6" fill="#aadafa" opacity="0.62"/><rect x="18" y="20.5" width="2" height="2.6" fill="#aadafa" opacity="0.62"/><rect x="20" y="20.5" width="2" height="2.6" fill="#aadafa" opacity="0.62"/><rect x="22" y="20.5" width="2" height="2.6" fill="#aadafa" opacity="0.62"/><rect x="24" y="20.5" width="2" height="2.6" fill="#aadafa" opacity="0.62"/><rect x="26" y="20.5" width="2" height="2.6" fill="#aadafa" opacity="0.62"/><rect x="28" y="20.5" width="2" height="2.6" fill="#aadafa" opacity="0.62"/><rect x="30" y="20.5" width="2" height="2.6" fill="#aadafa" opacity="0.62"/><rect x="32" y="20.5" width="2" height="2.6" fill="#d4d4d4" opacity="0.3"/><rect x="36" y="20.5" width="2" height="2.6" fill="#aadafa" opacity="0.62"/><rect x="38" y="20.5" width="2" height="2.6" fill="#aadafa" opacity="0.62"/><rect x="40" y="20.5" width="2" height="2.6" fill="#d4d4d4" opacity="0.3"/><rect x="42" y="20.5" width="2" height="2.6" fill="#aadafa" opacity="0.62"/><rect x="44" y="20.5" width="2" height="2.6" fill="#aadafa" opacity="0.62"/><rect x="46" y="20.5" width="2" height="2.6" fill="#aadafa" opacity="0.62"/><rect x="48" y="20.5" width="2" height="2.6" fill="#aadafa" opacity="0.62"/><rect x="50" y="20.5" width="2" height="2.6" fill="#aadafa" opacity="0.62"/><rect x="52" y="20.5" width="2" height="2.6" fill="#d4d4d4" opacity="0.3"/><rect x="8" y="24.5" width="2" height="2.6" fill="#d4d4d4" opacity="0.3"/><rect x="10" y="24.5" width="2" height="2.6" fill="#d4d4d4" opacity="0.3"/><rect x="8" y="28.5" width="2" height="2.6" fill="#dcdcaf" opacity="0.62"/><rect x="10" y="28.5" width="2" height="2.6" fill="#dcdcaf" opacity="0.62"/><rect x="12" y="28.5" width="2" height="2.6" fill="#dcdcaf" opacity="0.62"/><rect x="14" y="28.5" width="2" height="2.6" fill="#dcdcaf" opacity="0.62"/><rect x="16" y="28.5" width="2" height="2.6" fill="#d4d4d4" opacity="0.3"/><rect x="18" y="28.5" width="2" height="2.6" fill="#aadafa" opacity="0.62"/><rect x="20" y="28.5" width="2" height="2.6" fill="#aadafa" opacity="0.62"/><rect x="22" y="28.5" width="2" height="2.6" fill="#aadafa" opacity="0.62"/><rect x="24" y="28.5" width="2" height="2.6" fill="#aadafa" opacity="0.62"/><rect x="26" y="28.5" width="2" height="2.6" fill="#d4d4d4" opacity="0.3"/><rect x="30" y="28.5" width="2" height="2.6" fill="#d4d4d4" opacity="0.3"/><rect x="16" y="32.5" width="2" height="2.6" fill="#679ad1" opacity="0.62"/><rect x="18" y="32.5" width="2" height="2.6" fill="#679ad1" opacity="0.62"/><rect x="20" y="32.5" width="2" height="2.6" fill="#679ad1" opacity="0.62"/><rect x="22" y="32.5" width="2" height="2.6" fill="#679ad1" opacity="0.62"/><rect x="24" y="32.5" width="2" height="2.6" fill="#d4d4d4" opacity="0.3"/><rect x="26" y="32.5" width="2" height="2.6" fill="#aadafa" opacity="0.62"/><rect x="28" y="32.5" width="2" height="2.6" fill="#aadafa" opacity="0.62"/><rect x="30" y="32.5" width="2" height="2.6" fill="#aadafa" opacity="0.62"/><rect x="32" y="32.5" width="2" height="2.6" fill="#aadafa" opacity="0.62"/><rect x="34" y="32.5" width="2" height="2.6" fill="#aadafa" opacity="0.62"/><rect x="36" y="32.5" width="2" height="2.6" fill="#aadafa" opacity="0.62"/><rect x="38" y="32.5" width="2" height="2.6" fill="#aadafa" opacity="0.62"/><rect x="40" y="32.5" width="2" height="2.6" fill="#aadafa" opacity="0.62"/><rect x="42" y="32.5" width="2" height="2.6" fill="#d4d4d4" opacity="0.3"/><rect x="44" y="32.5" width="2" height="2.6" fill="#aadafa" opacity="0.62"/><rect x="46" y="32.5" width="2" height="2.6" fill="#aadafa" opacity="0.62"/><rect x="48" y="32.5" width="2" height="2.6" fill="#aadafa" opacity="0.62"/><rect x="50" y="32.5" width="2" height="2.6" fill="#aadafa" opacity="0.62"/><rect x="52" y="32.5" width="2" height="2.6" fill="#aadafa" opacity="0.62"/><rect x="54" y="32.5" width="2" height="2.6" fill="#aadafa" opacity="0.62"/><rect x="58" y="32.5" width="2" height="2.6" fill="#d4d4d4" opacity="0.3"/><rect x="62" y="32.5" width="2" height="2.6" fill="#aadafa" opacity="0.62"/><rect x="64" y="32.5" width="2" height="2.6" fill="#aadafa" opacity="0.62"/><rect x="66" y="32.5" width="2" height="2.6" fill="#aadafa" opacity="0.62"/><rect x="68" y="32.5" width="2" height="2.6" fill="#aadafa" opacity="0.62"/><rect x="70" y="32.5" width="2" height="2.6" fill="#d4d4d4" opacity="0.3"/><rect x="72" y="32.5" width="2" height="2.6" fill="#aadafa" opacity="0.62"/><rect x="74" y="32.5" width="2" height="2.6" fill="#aadafa" opacity="0.62"/><rect x="76" y="32.5" width="2" height="2.6" fill="#aadafa" opacity="0.62"/><rect x="78" y="32.5" width="2" height="2.6" fill="#aadafa" opacity="0.62"/><rect x="80" y="32.5" width="2" height="2.6" fill="#d4d4d4" opacity="0.3"/><rect x="16" y="36.5" width="2" height="2.6" fill="#679ad1" opacity="0.62"/><rect x="18" y="36.5" width="2" height="2.6" fill="#679ad1" opacity="0.62"/><rect x="20" y="36.5" width="2" height="2.6" fill="#679ad1" opacity="0.62"/><rect x="22" y="36.5" width="2" height="2.6" fill="#679ad1" opacity="0.62"/><rect x="24" y="36.5" width="2" height="2.6" fill="#d4d4d4" opacity="0.3"/><rect x="26" y="36.5" width="2" height="2.6" fill="#aadafa" opacity="0.62"/><rect x="28" y="36.5" width="2" height="2.6" fill="#aadafa" opacity="0.62"/><rect x="30" y="36.5" width="2" height="2.6" fill="#aadafa" opacity="0.62"/><rect x="32" y="36.5" width="2" height="2.6" fill="#aadafa" opacity="0.62"/><rect x="34" y="36.5" width="2" height="2.6" fill="#aadafa" opacity="0.62"/><rect x="36" y="36.5" width="2" height="2.6" fill="#aadafa" opacity="0.62"/><rect x="38" y="36.5" width="2" height="2.6" fill="#aadafa" opacity="0.62"/><rect x="40" y="36.5" width="2" height="2.6" fill="#aadafa" opacity="0.62"/><rect x="42" y="36.5" width="2" height="2.6" fill="#d4d4d4" opacity="0.3"/><rect x="44" y="36.5" width="2" height="2.6" fill="#aadafa" opacity="0.62"/><rect x="46" y="36.5" width="2" height="2.6" fill="#aadafa" opacity="0.62"/><rect x="48" y="36.5" width="2" height="2.6" fill="#aadafa" opacity="0.62"/><rect x="50" y="36.5" width="2" height="2.6" fill="#aadafa" opacity="0.62"/><rect x="52" y="36.5" width="2" height="2.6" fill="#aadafa" opacity="0.62"/><rect x="54" y="36.5" width="2" height="2.6" fill="#aadafa" opacity="0.62"/><rect x="58" y="36.5" width="2" height="2.6" fill="#d4d4d4" opacity="0.3"/><rect x="62" y="36.5" width="2" height="2.6" fill="#aadafa" opacity="0.62"/><rect x="64" y="36.5" width="2" height="2.6" fill="#aadafa" opacity="0.62"/><rect x="66" y="36.5" width="2" height="2.6" fill="#aadafa" opacity="0.62"/><rect x="68" y="36.5" width="2" height="2.6" fill="#aadafa" opacity="0.62"/><rect x="70" y="36.5" width="2" height="2.6" fill="#d4d4d4" opacity="0.3"/><rect x="72" y="36.5" width="2" height="2.6" fill="#aadafa" opacity="0.62"/><rect x="74" y="36.5" width="2" height="2.6" fill="#aadafa" opacity="0.62"/><rect x="76" y="36.5" width="2" height="2.6" fill="#aadafa" opacity="0.62"/><rect x="78" y="36.5" width="2" height="2.6" fill="#aadafa" opacity="0.62"/><rect x="80" y="36.5" width="2" height="2.6" fill="#d4d4d4" opacity="0.3"/><rect x="8" y="40.5" width="2" height="2.6" fill="#d4d4d4" opacity="0.3"/><rect x="0" y="44.5" width="2" height="2.6" fill="#d4d4d4" opacity="0.3"/><rect x="2" y="44.5" width="2" height="2.6" fill="#d4d4d4" opacity="0.3"/><rect x="4" y="44.5" width="2" height="2.6" fill="#d4d4d4" opacity="0.3"/></svg>
<div class="abs" style="left:2450px;top:0px;width:28px;height:1432px;background:#434343;"></div>
<div class="abs" style="left:2450px;top:0px;width:2px;height:1756px;background:rgba(127,127,127,0.3);"></div>
<div class="abs" style="left:2452px;top:320px;width:26px;height:4px;background:#8a8a8a;"></div>
</div>
<div id="status">
<svg class="abs" style="left:30px;top:8px" width="120" height="30" viewBox="30 1878 120 30"><circle cx="46.9" cy="1892.9" r="11" fill="#ffffff"/><path d="M41.3,1887.3 L52.5,1898.5 M52.5,1887.3 L41.3,1898.5" stroke="#2f79c7" stroke-width="3.1"/><path d="M103,1882.8 L113.3,1903.3 L92.7,1903.3 Z" fill="#ffffff" stroke="#ffffff" stroke-width="1.5" stroke-linejoin="round"/><rect x="101.8" y="1889.5" width="2.4" height="8" fill="#2f79c7"/><rect x="101.8" y="1899" width="2.4" height="2.4" fill="#2f79c7"/></svg>
<div class="it" style="left:66.7px">0</div>
<div class="it" style="left:122.3px">0</div>
<div class="it" style="left:2298.2999999999997px">Ln 12, Col 5</div>
<div class="it" style="left:2460.7px">Spaces: 4</div>
<div class="it" style="left:2602.7px">UTF-8</div>
<div class="it" style="left:2706.5px">LF</div>
<div class="it" style="left:2763.7px">JavaScript</div>
<svg class="abs" style="left:2914px;top:7px" width="32" height="32" viewBox="0 0 32 32"><circle cx="16" cy="15.5" r="14.2" fill="#ffffff"/><circle cx="11.2" cy="11.5" r="2.3" fill="#2f79c7"/><circle cx="20.8" cy="11.5" r="2.3" fill="#2f79c7"/><path d="M8.5,17 Q16,25.5 23.5,17" fill="none" stroke="#2f79c7" stroke-width="2.3"/></svg>
<svg class="abs" style="left:2976px;top:7px" width="28" height="32" viewBox="0 0 28 32"><path d="M14,2 Q15.6,2 15.8,4.2 Q22.5,5.8 22.5,14 L22.5,20.5 L26,24.5 L2,24.5 L5.5,20.5 L5.5,14 Q5.5,5.8 12.2,4.2 Q12.4,2 14,2 Z" fill="#ffffff"/><path d="M10.5,26.2 Q14,30.5 17.5,26.2 Z" fill="#ffffff"/></svg>
</div>
</div></body></html>
